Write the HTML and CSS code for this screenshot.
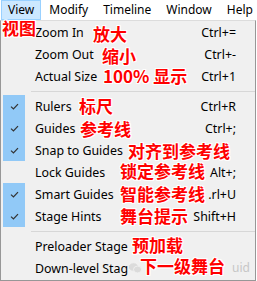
FILE: index.html
```html
<!DOCTYPE html>
<html>
<head>
<meta charset="utf-8">
<link rel="stylesheet" href="styles.css">
</head>
<body>
<div class="screen">
  <div class="menubar">
    <span class="top-item active">View</span>
    <span class="top-item">Modify</span>
    <span class="top-item">Timeline</span>
    <span class="top-item">Window</span>
    <span class="top-item">Help</span>
  </div>
  <div class="menu">
    <div class="row"><span class="check"></span><span class="label">Zoom In</span><span class="key">Ctrl+=</span></div>
    <div class="row"><span class="check"></span><span class="label">Zoom Out</span><span class="key">Ctrl+-</span></div>
    <div class="row"><span class="check"></span><span class="label">Actual Size</span><span class="key">Ctrl+1</span></div>
    <div class="sep"></div>
    <div class="row"><span class="check on"><svg viewBox="0 0 10 8" class="tick"><path d="M1 4.2 L3.8 6.8 L9 1.2"/></svg></span><span class="label">Rulers</span><span class="key">Ctrl+R</span></div>
    <div class="row"><span class="check on"><svg viewBox="0 0 10 8" class="tick"><path d="M1 4.2 L3.8 6.8 L9 1.2"/></svg></span><span class="label">Guides</span><span class="key">Ctrl+;</span></div>
    <div class="row"><span class="check on"><svg viewBox="0 0 10 8" class="tick"><path d="M1 4.2 L3.8 6.8 L9 1.2"/></svg></span><span class="label">Snap to Guides</span><span class="key"></span></div>
    <div class="row"><span class="check"></span><span class="label">Lock Guides</span><span class="key">Alt+;</span></div>
    <div class="row"><span class="check on"><svg viewBox="0 0 10 8" class="tick"><path d="M1 4.2 L3.8 6.8 L9 1.2"/></svg></span><span class="label">Smart Guides</span><span class="key">.rl+U</span></div>
    <div class="row"><span class="check on"><svg viewBox="0 0 10 8" class="tick"><path d="M1 4.2 L3.8 6.8 L9 1.2"/></svg></span><span class="label">Stage Hints</span><span class="key">Shift+H</span></div>
    <div class="sep"></div>
    <div class="row"><span class="check"></span><span class="label">Preloader Stage</span><span class="key"></span></div>
    <div class="row"><span class="check"></span><span class="label">Down-level Stag</span><span class="key"></span></div>
  </div>

  <span class="note n-view">视图</span>
  <span class="note n-zin">放大</span>
  <span class="note n-zout">缩小</span>
  <span class="note n-actual">100% 显示</span>
  <span class="note n-rulers">标尺</span>
  <span class="note n-guides">参考线</span>
  <span class="note n-snap">对齐到参考线</span>
  <span class="note n-lock">锁定参考线</span>
  <span class="note n-smart">智能参考线</span>
  <span class="note n-hints">舞台提示</span>
  <span class="note n-pre">预加载</span>
  <span class="note n-down">下一级舞台</span>

  <div class="watermark">
    <svg class="wm-icon" viewBox="0 0 14 12"><ellipse cx="5.5" cy="5" rx="5" ry="4.2"/><ellipse cx="9.5" cy="7.5" rx="4" ry="3.4"/></svg>
    <span class="wm-end">uid</span>
  </div>
</div>
</body>
</html>
```

FILE: styles.css
```css
html, body {
  margin: 0;
  padding: 0;
  background: #ffffff;
}
.screen {
  position: relative;
  width: 257px;
  height: 281px;
  overflow: hidden;
  font-family: "Noto Sans", "Liberation Sans", sans-serif;
  font-size: 12px;
  color: #000;
}
.menubar {
  display: flex;
  height: 20px;
  align-items: stretch;
  padding-left: 1px;
  background: #fff;
}
.top-item {
  display: flex;
  align-items: center;
  padding: 0 6px;
  margin-right: 1px;
  border: 1px solid transparent;
  line-height: 18px;
}
.top-item.active {
  background: #cce8ff;
  border-color: #99d1ff;
}
.menu {
  width: 254px;
  height: 259px;
  background: #f0f0f0;
  border: 1px solid #979797;
  border-top-color: #dcdcdc;
  display: flex;
  flex-direction: column;
  font-size: 12.4px;
}
.row {
  display: flex;
  align-items: center;
  height: 22px;
  flex: none;
}
.check {
  width: 22px;
  height: 22px;
  margin-left: 2px;
  margin-right: 10px;
  display: flex;
  align-items: center;
  justify-content: center;
  flex: none;
}
.check.on {
  background: #91c9f7;
}
.tick {
  width: 9px;
  height: 7px;
  fill: none;
  stroke: #333;
  stroke-width: 1.4;
}
.label {
  flex: 1;
  white-space: nowrap;
}
.key {
  padding-right: 19px;
  white-space: nowrap;
}
.sep {
  height: 8px;
  flex: none;
  display: flex;
  align-items: center;
  padding-left: 30px;
}
.sep::before {
  content: "";
  display: block;
  flex: 1;
  height: 1px;
  background: #d7d7d7;
}
.watermark {
  position: absolute;
  left: 128px;
  top: 261px;
  width: 122px;
  display: flex;
  align-items: center;
  color: #bdbdbd;
  font-size: 12px;
  line-height: 14px;
  opacity: 0.8;
}
.wm-end {
  margin-left: auto;
}
.wm-icon {
  width: 14px;
  height: 12px;
  fill: #d6d6d6;
  stroke: #f4f4f4;
  stroke-width: 0.8;
}
.note {
  position: absolute;
  font-family: "Noto Sans CJK SC", sans-serif;
  font-weight: 700;
  font-size: 17px;
  line-height: 17px;
  color: #ff0000;
  white-space: nowrap;
  text-shadow:
    1px 0 0 #fff, -1px 0 0 #fff, 0 1px 0 #fff, 0 -1px 0 #fff,
    1px 1px 0 #fff, -1px -1px 0 #fff, 1px -1px 0 #fff, -1px 1px 0 #fff;
}
.n-view { left: 2px; top: 19px; }
.n-zin { left: 93px; top: 25px; }
.n-zout { left: 102px; top: 47px; }
.n-actual { left: 103px; top: 67px; }
.n-rulers { left: 79px; top: 97px; }
.n-guides { left: 80px; top: 120px; }
.n-snap { left: 128px; top: 142px; }
.n-lock { left: 120px; top: 162px; }
.n-smart { left: 120px; top: 185px; }
.n-hints { left: 120px; top: 207px; }
.n-pre { left: 132px; top: 236px; }
.n-down { left: 140px; top: 257px; }
```
